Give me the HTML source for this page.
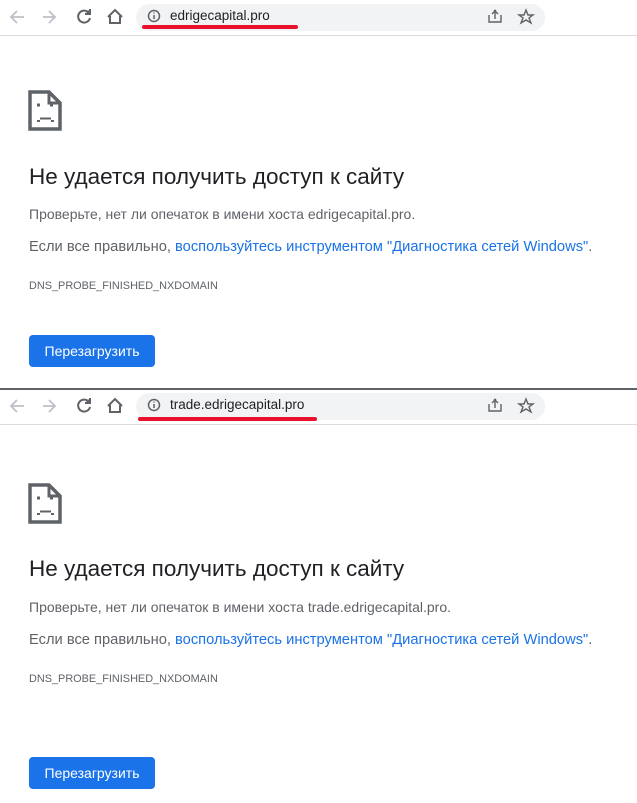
<!DOCTYPE html><html><head><meta charset="utf-8"><style>
body{margin:0;width:637px;height:803px;background:#fff;font-family:"Liberation Sans",sans-serif;position:relative;overflow:hidden}
.a{position:absolute}
.pill{position:absolute;left:136px;width:409px;height:27px;background:#f1f3f4;border-radius:14px}
.url{position:absolute;font-size:13.5px;color:#202124}
.red{position:absolute;height:4px;background:#e8102a;border-radius:2px}
h1{position:absolute;margin:0;left:29px;font-size:22.5px;font-weight:normal;color:#202124;white-space:nowrap}
.p{position:absolute;left:29px;font-size:14px;color:#5f6368;white-space:nowrap}
.p2{position:absolute;left:29px;font-size:14.7px;color:#5f6368;white-space:nowrap}
.p2 span{color:#1a73e8}
.code{position:absolute;left:29px;font-size:10.9px;color:#5f6368}
.btn{position:absolute;left:29px;width:126px;height:32px;background:#1a73e8;color:#fff;border-radius:4px;font-size:14px;line-height:32px;text-align:center}
.sep{position:absolute;left:0;width:637px;height:1px;background:#dadce0}
</style></head><body>
<div class="sep" style="top:35px"></div>
<div class="a" style="left:0;top:388px;width:637px;height:2px;background:#5f6368"></div>
<div class="sep" style="top:424px"></div>

<div class="pill" style="top:4px"></div>
<div class="pill" style="top:393px"></div>
<svg class="a" style="left:0;top:0" width="637" height="803" fill="none">
<g id="tb">
 <path d="M24 17H12M17 11l-6 6 6 6" stroke="#bdc1c6" stroke-width="1.8"/>
 <path d="M43 17h12M49 11l6 6-6 6" stroke="#bdc1c6" stroke-width="1.8"/>
 <path d="M89 13a6 6 0 1 0 1 5" stroke="#5f6368" stroke-width="2"/><path d="M90 9v5h-5" stroke="#5f6368" fill="#5f6368" stroke-width="2"/>
 <path d="M108 17l7-7 7 7M110 16v7h10v-7" stroke="#5f6368" stroke-width="2"/>
 <circle cx="154" cy="16" r="5.5" stroke="#5f6368" stroke-width="1.5"/><path d="M154 15v4M154 12.5v1" stroke="#5f6368" stroke-width="1.5"/>
 <path d="M489 15v7h12v-7M495 19v-8M492 14l4-4M498 14l-4-4" stroke="#5f6368" stroke-width="1.4"/>
 <path d="M526 10l2 5h5l-4 3 2 5-5-3-5 3 2-5-4-3h5z" stroke="#5f6368" stroke-width="1.4"/>
</g>
<use href="#tb" y="389"/>
<g id="ic" stroke="#5f6368">
 <path d="M30 92h19l11 11v26H30z" stroke-width="3.5"/>
 <path d="M49 92v11h11" stroke-width="3"/>
 <path d="M37 105h3M50 105h3" stroke-width="3"/>
 <path d="M40 118.5h11M37 121h3M51 121h3" stroke-width="2"/>
</g>
<use href="#ic" y="393"/>
</svg>
<div class="url" style="left:170px;top:8px">edrigecapital.pro</div>
<div class="red" style="left:142px;top:25px;width:156px"></div>
<div class="url" style="left:170px;top:397px">trade.edrigecapital.pro</div>
<div class="red" style="left:138px;top:417px;width:179px"></div>

<h1 style="top:164px">Не удается получить доступ к сайту</h1>
<div class="p" style="top:206px">Проверьте, нет ли опечаток в имени хоста edrigecapital.pro.</div>
<div class="p2" style="top:239px">Если все правильно, <span>воспользуйтесь инструментом "Диагностика сетей Windows"</span>.</div>
<div class="code" style="top:280px">DNS_PROBE_FINISHED_NXDOMAIN</div>
<div class="btn" style="top:335px">Перезагрузить</div>

<h1 style="top:556px">Не удается получить доступ к сайту</h1>
<div class="p" style="top:599px">Проверьте, нет ли опечаток в имени хоста trade.edrigecapital.pro.</div>
<div class="p2" style="top:632px">Если все правильно, <span>воспользуйтесь инструментом "Диагностика сетей Windows"</span>.</div>
<div class="code" style="top:673px">DNS_PROBE_FINISHED_NXDOMAIN</div>
<div class="btn" style="top:757px">Перезагрузить</div>
</body></html>
